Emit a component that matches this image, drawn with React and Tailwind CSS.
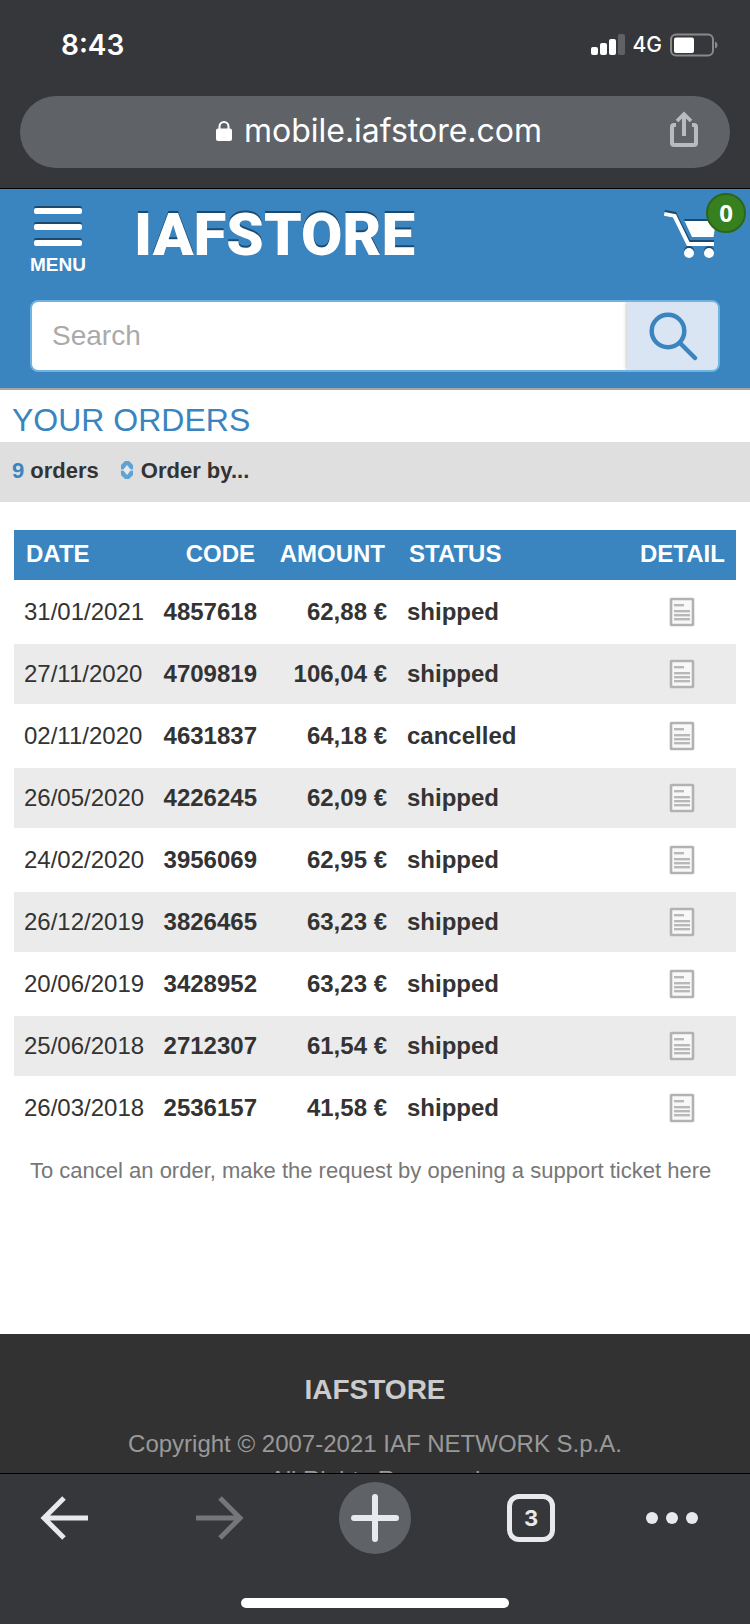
/**
 * ORDER HISTORY SCREEN
 *
 * Mobile shop page inside the phone's browser chrome:
 * status bar, address bar, shop header, orders table, footer, toolbar.
 */

const ORDERS = [
  { date: '31/01/2021', code: '4857618', amount: '62,88 €', status: 'shipped' },
  { date: '27/11/2020', code: '4709819', amount: '106,04 €', status: 'shipped' },
  { date: '02/11/2020', code: '4631837', amount: '64,18 €', status: 'cancelled' },
  { date: '26/05/2020', code: '4226245', amount: '62,09 €', status: 'shipped' },
  { date: '24/02/2020', code: '3956069', amount: '62,95 €', status: 'shipped' },
  { date: '26/12/2019', code: '3826465', amount: '63,23 €', status: 'shipped' },
  { date: '20/06/2019', code: '3428952', amount: '63,23 €', status: 'shipped' },
  { date: '25/06/2018', code: '2712307', amount: '61,54 €', status: 'shipped' },
  { date: '26/03/2018', code: '2536157', amount: '41,58 €', status: 'shipped' },
]

function StatusBar() {
  return (
    <div className="flex h-24 items-center justify-between pr-8 pl-[61px] pb-1.5 text-white">
      <span className="text-[28px] font-semibold">8:43</span>
      <div className="flex items-center gap-2">
        <svg className="h-[22px] w-[34px]" viewBox="0 0 34 22" fill="#fff">
          <rect x="0" y="13" width="7" height="8" rx="2" />
          <rect x="9" y="9" width="7" height="12" rx="2" />
          <rect x="18" y="5" width="7" height="16" rx="2" />
          <rect x="27" y="0" width="7" height="21" rx="2" fill="#606164" />
        </svg>
        <span className="text-[21px] font-medium">4G</span>
        <svg className="h-6 w-12" viewBox="0 0 48 24">
          <rect x="1" y="1.5" width="42" height="21" rx="5" fill="none" stroke="#89898c" strokeWidth="2" />
          <rect x="4" y="4.5" width="20" height="15.5" rx="2" fill="#fff" />
          <path d="M45 8.5c3.4 1 3.4 6 0 7z" fill="#89898c" />
        </svg>
      </div>
    </div>
  )
}

function AddressBar() {
  return (
    <div className="mx-5 mb-5 flex h-[72px] items-center rounded-full bg-[#5f6267] px-8 text-white">
      <div className="w-9" />
      <div className="flex flex-1 items-center justify-center gap-3 pb-0.5">
        <svg className="h-[21px] w-4" viewBox="0 0 16 21">
          <rect x="0" y="7.5" width="16" height="12.5" rx="2" fill="#fff" />
          <path d="M3.5 8.5V5.5a4.5 4.5 0 0 1 9 0v3" fill="none" stroke="#fff" strokeWidth="2" />
        </svg>
        <span className="text-[32px] leading-none">mobile.iafstore.com</span>
      </div>
      <button type="button" aria-label="Share" className="pb-1.5">
        <svg className="h-9 w-7" viewBox="0 0 28 36" fill="none" stroke="#b9bbc1" strokeWidth="4">
          <path d="M6 14H4a2 2 0 0 0-2 2v16a2 2 0 0 0 2 2h20a2 2 0 0 0 2-2V16a2 2 0 0 0-2-2h-2" />
          <path d="M14 25V4" />
          <path d="M7 10l7-7 7 7" strokeWidth="3.6" />
        </svg>
      </button>
    </div>
  )
}

function CartIcon() {
  return (
    <svg className="h-[50px] w-[52px]" viewBox="0 0 52 50">
      <g fill="#1c4a6e">
        <path d="M1 1l11 2 14 28h24v3H23L9 6 0 5z" />
        <path d="M20 10h32l-3 8H24z" />
        <circle cx="25" cy="42" r="5" />
        <circle cx="45" cy="42" r="5" />
      </g>
      <g fill="#fff">
        <path d="M0.500 3l11.500 2.200L25.500 33H50v4H23L9 8.600 0 6.800z" />
        <path d="M20.500 12H52l-2.500 16H28z" />
        <circle cx="25" cy="44" r="5" />
        <circle cx="45" cy="44" r="5" />
      </g>
    </svg>
  )
}

function ShopHeader() {
  return (
    <header className="border-b-2 border-[#a5a5a5] bg-[#3a84bf] px-[30px] pb-4">
      <div className="flex h-[111px] items-start pt-4">
        <button type="button" className="flex w-14 flex-col items-center text-white">
          <svg className="h-[42px] w-12" viewBox="0 0 48 42">
            <g fill="#1c4a6e">
              <rect x="0" y="1" width="48" height="6" rx="2" />
              <rect x="0" y="17" width="48" height="6" rx="2" />
              <rect x="0" y="33" width="48" height="6" rx="2" />
            </g>
            <g fill="#fff">
              <rect x="0" y="3" width="48" height="6" rx="2" />
              <rect x="0" y="19" width="48" height="6" rx="2" />
              <rect x="0" y="35" width="48" height="6" rx="2" />
            </g>
          </svg>
          <span className="mt-1.5 text-[19px] leading-6 font-bold">MENU</span>
        </button>
        <a
          href="#home"
          className="ml-12 pt-0.5 font-['Roboto',sans-serif] text-[60px] leading-[56px] font-black text-white [text-shadow:0_-2px_0_#1c4a6e]"
        >
          IAFSTORE
        </a>
        <a href="#cart" aria-label="Cart" className="relative mr-1 ml-auto pt-1">
          <CartIcon />
          <span className="absolute -top-3 left-[42px] flex size-10 items-center justify-center rounded-full border-2 border-[#2c661a] bg-[#37801f] font-['Open_Sans',sans-serif] text-2xl font-bold text-white">
            0
          </span>
        </a>
      </div>
      <form className="flex h-[72px] overflow-hidden rounded-lg border-2 border-[#6fb4e0] bg-white">
        <input
          type="search"
          aria-label="Search"
          placeholder="Search"
          className="min-w-0 flex-1 px-5 text-[28px] text-[#333] outline-none placeholder:text-[#aaa]"
        />
        <button
          type="button"
          aria-label="Submit search"
          className="flex w-[91px] items-center justify-center bg-[#dae5f3] shadow-[0_0_4px_rgba(0,0,0,0.35)]"
        >
          <svg className="size-[50px]" viewBox="0 0 50 50" fill="none" stroke="#3a84bf">
            <circle cx="20" cy="20" r="16.300" strokeWidth="4.500" />
            <path d="M32 32l15 15" strokeWidth="4.500" strokeLinecap="round" />
          </svg>
        </button>
      </form>
    </header>
  )
}

function SortIcon() {
  return (
    <svg className="h-[18px] w-3" viewBox="0 0 12 18">
      <path d="M0 4l4-4h4l4 4v5H0z" fill="#5fa3d2" />
      <path d="M0 14l4 4h4l4-4V9H0z" fill="#5fa3d2" />
      <path d="M0 8h12v2H0z" fill="#a9c8de" />
      <path d="M6 4l4 5-4 5-4-5z" fill="#e8e8e8" />
    </svg>
  )
}

function DetailIcon() {
  return (
    <svg className="h-[30px] w-[26px]" viewBox="0 0 26 30">
      <rect x="2" y="2" width="22" height="26" rx="0.500" fill="#f8f8f8" stroke="#b2b2b2" strokeWidth="2.600" />
      <g fill="#b8b8b8">
        <rect x="5" y="7" width="10" height="2.400" />
        <rect x="5" y="13" width="16" height="2.400" />
        <rect x="5" y="17" width="16" height="2.400" />
        <rect x="5" y="21" width="16" height="2.400" />
      </g>
    </svg>
  )
}

function OrdersTable() {
  return (
    <table className="w-full table-fixed border-separate border-spacing-x-0 border-spacing-y-0.5 text-2xl text-[#333]">
      <colgroup>
        <col className="w-[140px]" />
        <col className="w-[113px]" />
        <col className="w-[130px]" />
        <col />
        <col className="w-[108px]" />
      </colgroup>
      <thead>
        <tr className="h-[50px] bg-[#3a84bf] text-white">
          <th className="px-3 pb-0.5 text-left">DATE</th>
          <th className="px-3 pb-0.5 text-right">CODE</th>
          <th className="pr-3 pb-0.5 text-right">AMOUNT</th>
          <th className="px-3 pb-0.5 text-left">STATUS</th>
          <th className="px-3 pb-0.5 text-center">DETAIL</th>
        </tr>
      </thead>
      <tbody>
        {ORDERS.map((order) => (
          <tr key={order.code} className="h-[60px] even:bg-[#ebebeb]">
            <td className="pl-2.5">{order.date}</td>
            <td className="pr-2.5 text-right font-bold">{order.code}</td>
            <td className="pr-2.5 text-right font-bold">{order.amount}</td>
            <td className="px-2.5 font-bold">{order.status}</td>
            <td>
              <a href={`#order-${order.code}`} aria-label={`Detail of order ${order.code}`} className="flex justify-center">
                <DetailIcon />
              </a>
            </td>
          </tr>
        ))}
      </tbody>
    </table>
  )
}

function BrowserToolbar() {
  return (
    <nav className="shrink-0 border-t border-black bg-[#36373b] font-['Inter',sans-serif]">
      <div className="grid h-[88px] grid-cols-[128fr_184fr_126fr_186fr_96fr_30fr] items-center justify-items-center">
        <button type="button" aria-label="Back">
          <svg className="h-11 w-12" viewBox="0 0 48 44" fill="none" stroke="#e8e9ed" strokeWidth="5">
            <path d="M4 22h44M24 2L4 22l20 20" />
          </svg>
        </button>
        <button type="button" aria-label="Forward">
          <svg className="h-11 w-12" viewBox="0 0 48 44" fill="none" stroke="#757679" strokeWidth="5">
            <path d="M0 22h44M24 2l20 20-20 20" />
          </svg>
        </button>
        <button type="button" aria-label="New tab" className="flex size-[72px] items-center justify-center rounded-full bg-[#5f6267]">
          <svg className="size-12" viewBox="0 0 48 48" stroke="#e8e9ed" strokeWidth="6" strokeLinecap="round">
            <path d="M24 3v42M3 24h42" />
          </svg>
        </button>
        <button
          type="button"
          aria-label="3 open tabs"
          className="flex size-12 items-center justify-center rounded-xl border-[5px] border-[#e8e9ed] text-[22px] font-bold text-[#e8e9ed]"
        >
          3
        </button>
        <button type="button" aria-label="More">
          <svg className="h-3 w-[52px]" viewBox="0 0 52 12" fill="#e8e9ed">
            <circle cx="6" cy="6" r="6" />
            <circle cx="26" cy="6" r="6" />
            <circle cx="46" cy="6" r="6" />
          </svg>
        </button>
      </div>
      <div className="mx-auto mt-9 mb-4 h-2.5 w-[268px] rounded-full bg-white" />
    </nav>
  )
}

export default function App() {
  return (
    <div className="flex h-screen flex-col overflow-hidden bg-white font-['Liberation_Sans',Arial,sans-serif]">
      <div className="shrink-0 border-b border-black bg-[#36373b] font-['Inter',sans-serif]">
        <StatusBar />
        <AddressBar />
      </div>

      <div className="flex min-h-0 flex-1 flex-col overflow-hidden">
        <ShopHeader />

        <main>
          <h1 className="px-3 pt-2.5 pb-0.5 text-[32px] leading-10 text-[#3a84bf]">YOUR ORDERS</h1>
          <div className="flex h-[60px] items-center bg-[#dfdfdf] px-3 pb-1 text-[22px] font-bold text-[#333]">
            <span>
              <span className="text-[#3a84bf]">9</span> orders
            </span>
            <button type="button" className="ml-[22px] flex items-center gap-2">
              <SortIcon />
              Order by...
            </button>
          </div>

          <div className="px-3.5 pt-[26px]">
            <OrdersTable />
            <p className="px-4 pt-4 pb-[148px] text-[22px] leading-[30px] text-[#777]">
              To cancel an order, make the request by opening a support ticket here
            </p>
          </div>
        </main>

        <footer className="bg-[#323232] pt-9 text-center text-[#999]">
          <p className="text-[28px] leading-10 font-bold text-[#ccc]">IAFSTORE</p>
          <p className="mt-4 text-2xl leading-9">
            Copyright © 2007-2021 IAF NETWORK S.p.A.
            <br />
            All Rights Reserved
          </p>
        </footer>
      </div>

      <BrowserToolbar />
    </div>
  )
}
